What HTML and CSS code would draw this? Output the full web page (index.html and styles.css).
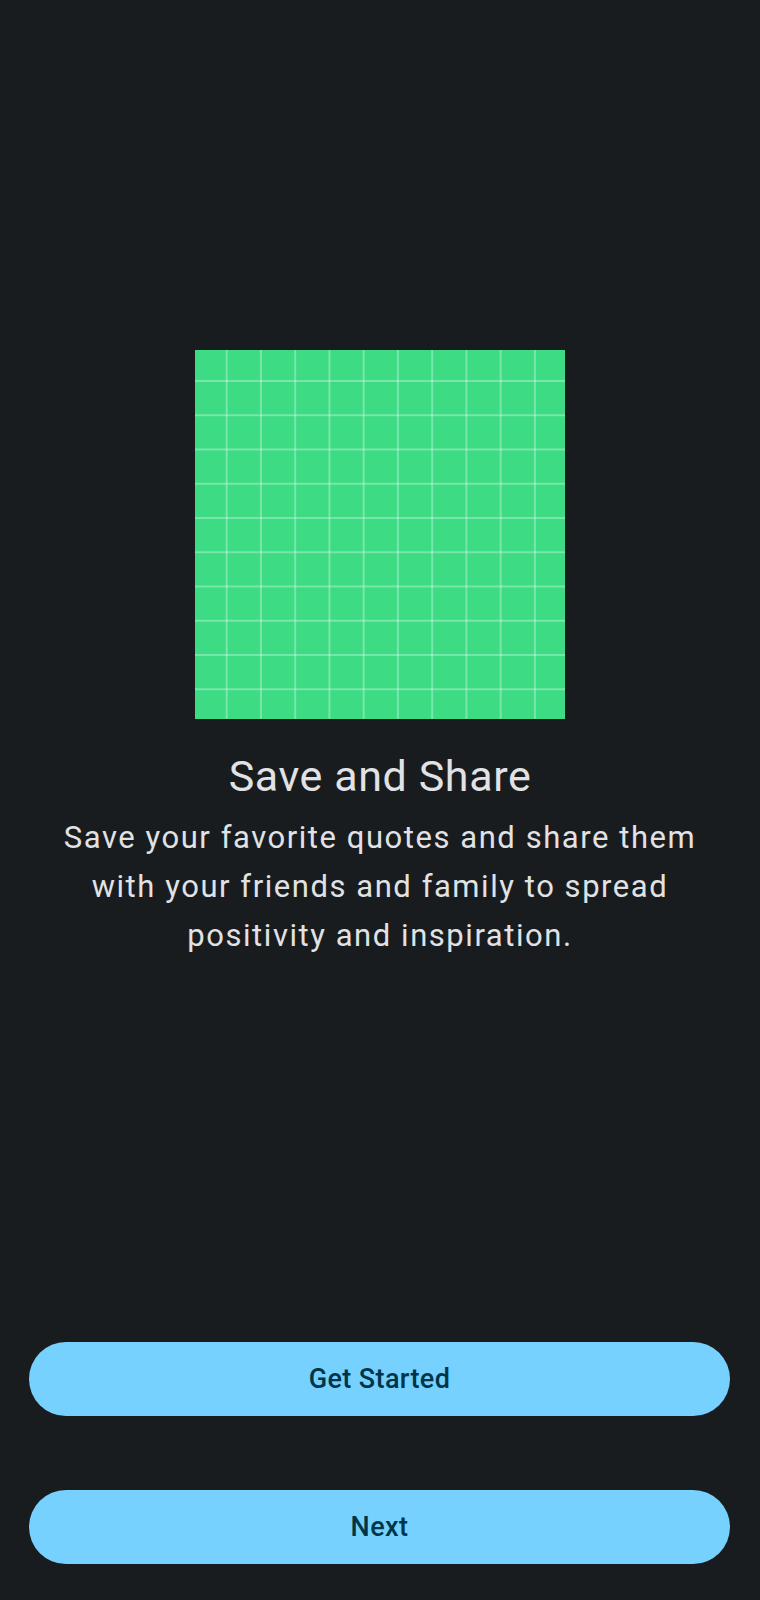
FILE: index.html
```html
<!DOCTYPE html>
<html lang="en">
<head>
<meta charset="utf-8">
<title>Save and Share</title>
<link rel="stylesheet" href="styles.css">
</head>
<body>
<main class="screen">
  <section class="content">
    <div class="illustration" role="img" aria-label="Illustration"></div>
    <h1 class="title">Save and Share</h1>
    <p class="description">Save your favorite quotes and share them with your friends and family to spread positivity and inspiration.</p>
  </section>
  <nav class="actions">
    <button class="btn" type="button">Get Started</button>
    <button class="btn" type="button">Next</button>
  </nav>
</main>
</body>
</html>
```

FILE: styles.css
```css
* { box-sizing: border-box; }

html, body {
  margin: 0;
  padding: 0;
  background: #191c1e;
}

body {
  font-family: Roboto, "Noto Sans", "Liberation Sans", sans-serif;
  color: #e1e2e5;
}

.screen {
  height: 1600px;
  display: flex;
  flex-direction: column;
}

.content {
  padding: 350px 50px 0;
  display: flex;
  flex-direction: column;
  align-items: center;
}

.illustration {
  width: 370px;
  height: 369px;
  background-color: #3ddc84;
  background-image:
    linear-gradient(to right, rgba(255,255,255,0.3) 2px, transparent 2px),
    linear-gradient(to bottom, rgba(255,255,255,0.3) 2px, transparent 2px);
  background-size: 34.25px 34.25px;
  background-position: 30.7px 30px;
}

.title {
  margin: 33px 0 0;
  font-size: 43px;
  line-height: 48px;
  font-weight: 400;
  letter-spacing: 0.6px;
  text-align: center;
  color: #e1e2e5;
}

.description {
  margin: 13px 0 0;
  font-size: 31px;
  line-height: 49px;
  letter-spacing: 1.55px;
  text-align: center;
  color: #e1e2e5;
}

.actions {
  margin-top: auto;
  padding: 0 30px 36px 29px;
  display: flex;
  flex-direction: column;
  gap: 74px;
}

.btn {
  height: 74px;
  border: none;
  border-radius: 37px;
  background: #76d1ff;
  color: #003549;
  font-family: Roboto, "Noto Sans", "Liberation Sans", sans-serif;
  font-size: 27px;
  font-weight: 500;
  letter-spacing: 0.4px;
  padding: 0;
  cursor: pointer;
}
```
